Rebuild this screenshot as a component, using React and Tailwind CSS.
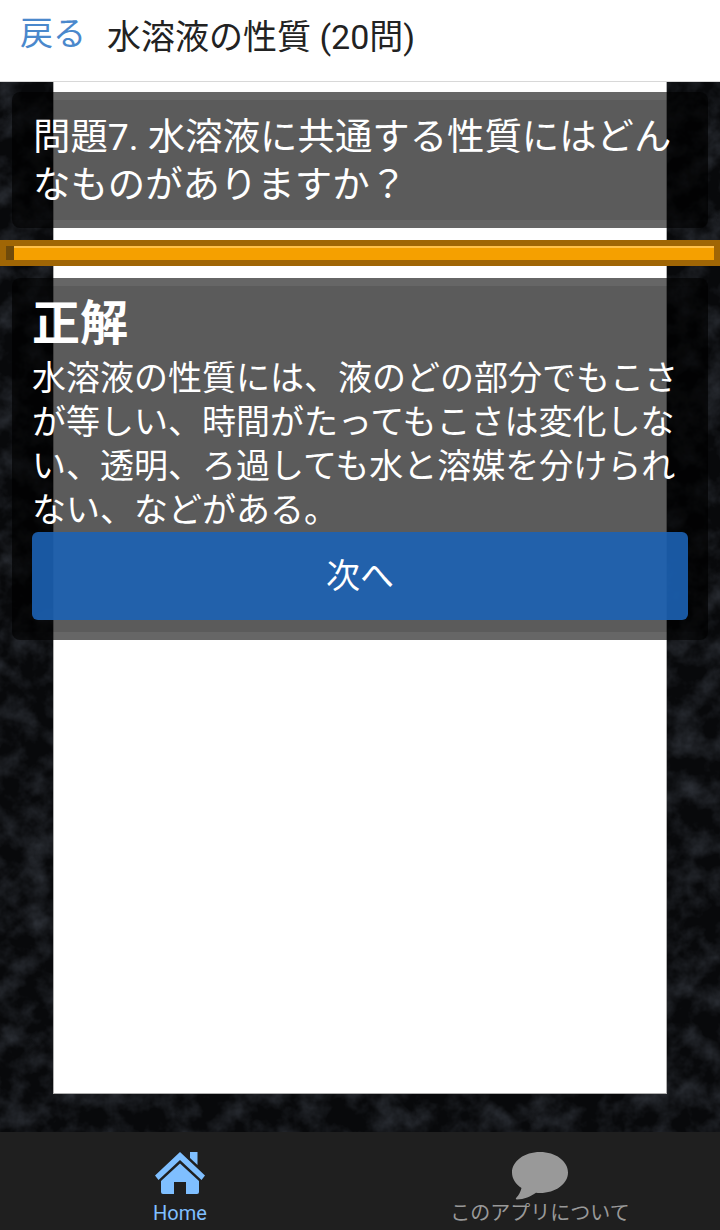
const cjk = { fontFamily: '"Roboto","Noto Sans CJK JP",sans-serif' };

function Texture() {
  return (
    <svg className="block w-full h-full" width="720" height="1050" xmlns="http://www.w3.org/2000/svg">
      <filter id="rock" x="0" y="0" width="100%" height="100%">
        <feTurbulence type="fractalNoise" baseFrequency="0.04" numOctaves="4" seed="11" />
        <feColorMatrix type="matrix" values="0 0 0 0 0.09  0 0 0 0 0.105  0 0 0 0 0.135  0.85 0 0 0 -0.32" />
      </filter>
      <rect width="720" height="1050" fill="#08090b" />
      <rect width="720" height="1050" filter="url(#rock)" />
    </svg>
  );
}

function Card({ children }) {
  return (
    <div className="mx-3 rounded-lg bg-black/60 py-2">
      <div className="bg-black/10">{children}</div>
    </div>
  );
}

function Home() {
  return (
    <svg width="50" height="42" viewBox="0 0 50 42" fill="#7fbfff">
      <path d="M35 0h7.500v13L35 6z" />
      <path d="M25 0 L50 23.500 L46.500 28 L25 8 L3.500 28 L0 23.500 Z" />
      <path d="M25 11.500 L44 29 V40 Q44 42 42 42 H31 V30 H19 V42 H8 Q6 42 6 40 V29 Z" />
    </svg>
  );
}

function Bubble() {
  return (
    <svg width="56" height="48" viewBox="0 0 56 48" fill="#999999">
      <path d="M28 0C43.500 0 56 9 56 20.500 C56 32 43.500 41 28 41 C26.500 41 25 41 24 40.800 C19 44.500 12 47.500 5 47.500 C3.500 47.500 3.500 46.500 4.500 45.500 C7 43 8.500 40 9.500 36 C3.500 32 0 26.500 0 20.500 C0 9 12.500 0 28 0Z" />
    </svg>
  );
}

export default function App() {
  return (
    <div className="w-[720px] h-[1230px] flex flex-col overflow-hidden bg-black" style={cjk}>
      <header className="h-[82px] shrink-0 bg-white border-b border-[#d8d8d8] flex items-center">
        <span className="ml-5 text-[33px] leading-none text-[#4a88cc] -mt-[14px]">戻る</span>
        <h1 className="ml-[21px] text-[34px] leading-none text-[#222222] font-normal -mt-[8px]">水溶液の性質 (20問)</h1>
      </header>

      <main className="grid h-[1050px] shrink-0">
        <div className="col-start-1 row-start-1 overflow-hidden"><Texture /></div>
        <div className="col-start-1 row-start-1 mx-[53px] h-[1012px] bg-white border-x border-b border-[#b0b0b0]" />
        <div className="col-start-1 row-start-1 pt-[10px] flex flex-col text-white">
          <Card>
            <p className="px-[21px] pt-[13px] h-[120px] text-[37.400px] leading-[48px]">問題7. 水溶液に共通する性質にはどんなものがありますか？</p>
          </Card>
          <div className="mt-3 h-[26px] bg-[#a06605] px-[6px] py-[6px] flex">
            <div className="w-2 bg-[#6f4a0a]" />
            <div className="flex-1 bg-[#f5a000] border-t-2 border-[#ffc04a]" />
          </div>
          <div className="mt-3">
            <Card>
              <div className="px-5 pb-3">
                <h2 className="text-[48px] leading-[68px] font-bold m-0 pt-[4px]">正解</h2>
                <p className="text-[34px] leading-[44px] -mt-[2px]">水溶液の性質には、液のどの部分でもこさが等しい、時間がたってもこさは変化しない、透明、ろ過しても水と溶媒を分けられない、などがある。</p>
                <button className="mt-0 w-full h-[88px] rounded-md bg-[#1c62b4]/90 text-[34px] text-white">次へ</button>
              </div>
            </Card>
          </div>
        </div>
      </main>

      <nav className="h-[98px] shrink-0 bg-[#1f1f1f] grid grid-cols-2">
        <div className="flex flex-col items-center pt-[20px]">
          <Home />
          <span className="text-[20px] leading-none mt-[9px] text-[#7fbfff]">Home</span>
        </div>
        <div className="flex flex-col items-center pt-[20px]">
          <Bubble />
          <span className="text-[20px] leading-none mt-[3px] text-[#999999]">このアプリについて</span>
        </div>
      </nav>
    </div>
  );
}
